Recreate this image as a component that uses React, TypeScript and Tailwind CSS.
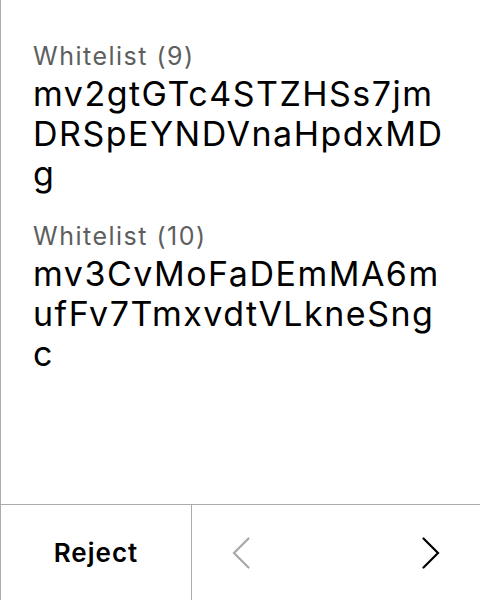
import React from "react";

function Chevron({ dir, color }: { dir: "left" | "right"; color: string }) {
  const pts = dir === "left" ? "16.5,1.5 2,16 16.5,30.5" : "1.5,1.5 16,16 1.5,30.5";
  return (
    <svg width="18" height="32" viewBox="0 0 18 32" fill="none">
      <polyline points={pts} stroke={color} strokeWidth="2.2" strokeLinecap="round" strokeLinejoin="miter" />
    </svg>
  );
}

const items = [
  { label: "Whitelist (9)", value: "mv2gtGTc4STZHSs7jmDRSpEYNDVnaHpdxMDg" },
  { label: "Whitelist (10)", value: "mv3CvMoFaDEmMA6mufFv7TmxvdtVLkneSngc" },
];

export default function App() {
  return (
    <div
      className="w-[480px] h-[600px] flex flex-col bg-white border-l border-[#ababab] overflow-hidden"
      style={{ fontFamily: "Inter, 'Noto Sans', sans-serif" }}
    >
      <div className="flex-1 flex flex-col gap-[28px] pt-[42px] px-[32px]">
        {items.map((it) => (
          <div key={it.label} className="flex flex-col gap-[4px]">
            <div className="text-[25px] leading-[28px] tracking-[1.5px] text-[#5e5e5e]">{it.label}</div>
            <div className="text-[34px] leading-[40px] tracking-[1.5px] text-black break-all">{it.value}</div>
          </div>
        ))}
      </div>
      <div className="h-[96px] flex border-t border-[#ababab]">
        <div className="w-[191px] flex items-center justify-center border-r border-[#ababab]">
          <span className="text-[26px] font-semibold tracking-[1px] text-black">Reject</span>
        </div>
        <div className="flex-1 flex items-center justify-between px-[40px]">
          <Chevron dir="left" color="#a8a8a8" />
          <Chevron dir="right" color="#000000" />
        </div>
      </div>
    </div>
  );
}
